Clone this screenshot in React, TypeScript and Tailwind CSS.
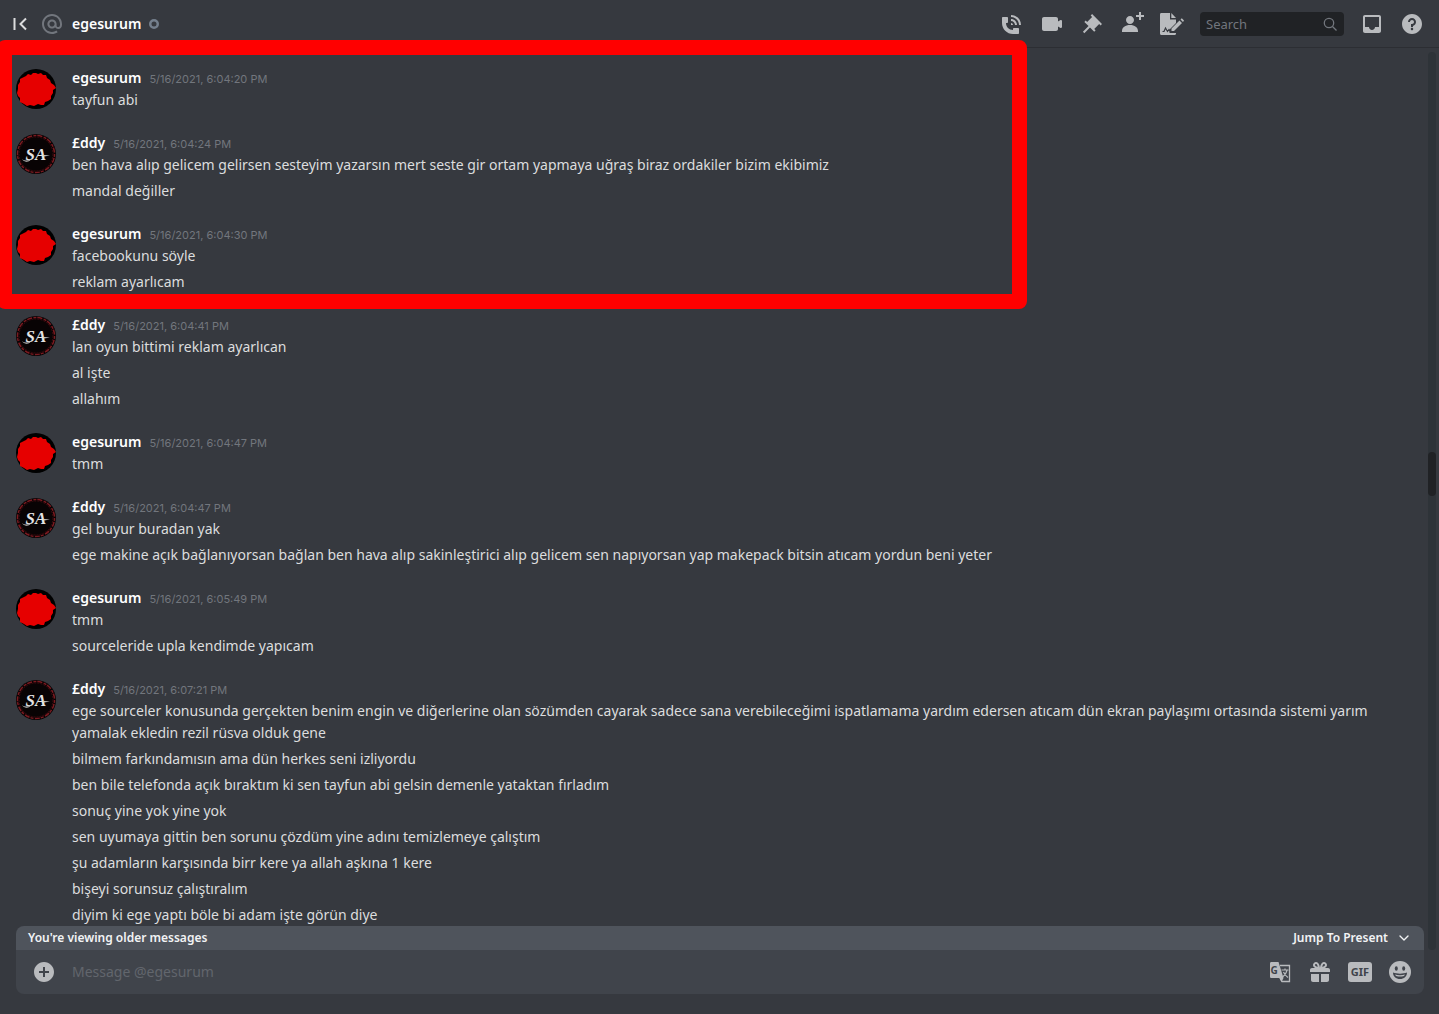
import type { ButtonHTMLAttributes, ReactNode } from "react";
import { ChevronDown } from "lucide-react";

type Author = "egesurum" | "£ddy";

interface MessageGroup {
  author: Author;
  time: string;
  lines: string[];
}

const groups: MessageGroup[] = [
  { author: "egesurum", time: "6:04:20 PM", lines: ["tayfun abi"] },
  {
    author: "£ddy",
    time: "6:04:24 PM",
    lines: [
      "ben hava alıp gelicem gelirsen sesteyim yazarsın mert seste gir ortam yapmaya uğraş biraz ordakiler bizim ekibimiz",
      "mandal değiller",
    ],
  },
  {
    author: "egesurum",
    time: "6:04:30 PM",
    lines: ["facebookunu söyle", "reklam ayarlıcam"],
  },
  {
    author: "£ddy",
    time: "6:04:41 PM",
    lines: ["lan oyun bittimi reklam ayarlıcan", "al işte", "allahım"],
  },
  { author: "egesurum", time: "6:04:47 PM", lines: ["tmm"] },
  {
    author: "£ddy",
    time: "6:04:47 PM",
    lines: [
      "gel buyur buradan yak",
      "ege makine açık bağlanıyorsan bağlan ben hava alıp sakinleştirici alıp gelicem sen napıyorsan yap makepack bitsin atıcam yordun beni yeter",
    ],
  },
  {
    author: "egesurum",
    time: "6:05:49 PM",
    lines: ["tmm", "sourceleride upla kendimde yapıcam"],
  },
  {
    author: "£ddy",
    time: "6:07:21 PM",
    lines: [
      "ege sourceler konusunda gerçekten benim engin ve diğerlerine olan sözümden cayarak sadece sana verebileceğimi ispatlamama yardım edersen atıcam dün ekran paylaşımı ortasında sistemi yarım yamalak ekledin rezil rüsva olduk gene",
      "bilmem farkındamısın ama dün herkes seni izliyordu",
      "ben bile telefonda açık bıraktım ki sen tayfun abi gelsin demenle yataktan fırladım",
      "sonuç yine yok yine yok",
      "sen uyumaya gittin ben sorunu çözdüm yine adını temizlemeye çalıştım",
      "şu adamların karşısında birr kere ya allah aşkına 1 kere",
      "bişeyi sorunsuz çalıştıralım",
      "diyim ki ege yaptı böle bi adam işte görün diye",
    ],
  },
];

const icons = {
  call: "M11 5V3C16.515 3 21 7.486 21 13H19C19 8.589 15.411 5 11 5ZM17 13H15C15 10.795 13.206 9 11 9V7C14.309 7 17 9.691 17 13ZM11 11V13H13C13 11.896 12.105 11 11 11ZM14 16H18C18.553 16 19 16.447 19 17V21C19 21.553 18.553 22 18 22H13C6.925 22 2 17.075 2 11V6C2 5.447 2.448 5 3 5H7C7.553 5 8 5.447 8 6V10C8 10.553 7.553 11 7 11H6C6.063 14.938 9 18 13 18V17C13 16.447 13.447 16 14 16Z",
  video:
    "M21.526 8.149C21.231 7.966 20.862 7.951 20.553 8.105L18 9.382V7C18 5.897 17.103 5 16 5H4C2.897 5 2 5.897 2 7V17C2 18.104 2.897 19 4 19H16C17.103 19 18 18.104 18 17V14.618L20.553 15.894C20.694 15.965 20.847 16 21 16C21.183 16 21.365 15.949 21.526 15.851C21.82 15.668 22 15.347 22 15V9C22 8.653 21.82 8.332 21.526 8.149Z",
  pin: "M22 12L12.101 2.101L10.686 3.514L12.101 4.929L7.151 9.878L5.736 8.465L4.322 9.88L8.565 14.122L2.908 19.778L4.322 21.192L9.979 15.536L14.222 19.778L15.636 18.364L14.222 16.95L19.171 12L20.586 13.414L22 12Z",
  addFriend:
    "M21 3H24V5H21V8H19V5H16V3H19V0H21V3ZM10 12C12.205 12 14 10.205 14 8C14 5.795 12.205 4 10 4C7.795 4 6 5.795 6 8C6 10.205 7.795 12 10 12ZM10 13C5.289 13 2 15.467 2 19V20H18V19C18 15.467 14.711 13 10 13Z",
  inbox:
    "M19 3H4.99C3.88 3 3.01 3.89 3.01 5L3 19C3 20.1 3.88 21 4.99 21H19C20.1 21 21 20.1 21 19V5C21 3.89 20.1 3 19 3ZM19 15H15C15 16.66 13.65 18 12 18C10.35 18 9 16.66 9 15H4.99V5H19V15Z",
  help: "M12 2C6.486 2 2 6.487 2 12C2 17.515 6.486 22 12 22C17.514 22 22 17.515 22 12C22 6.487 17.514 2 12 2ZM12 18.25C11.31 18.25 10.75 17.691 10.75 17C10.75 16.31 11.31 15.75 12 15.75C12.69 15.75 13.25 16.31 13.25 17C13.25 17.691 12.69 18.25 12 18.25ZM13 13.875V15H11V12H12C13.104 12 14 11.103 14 10C14 8.896 13.104 8 12 8C10.896 8 10 8.896 10 10H8C8 7.795 9.795 6 12 6C14.205 6 16 7.795 16 10C16 11.861 14.723 13.429 13 13.875Z",
  at: "M12 2C6.486 2 2 6.486 2 12C2 17.515 6.486 22 12 22C14.039 22 15.993 21.398 17.652 20.259L16.521 18.611C15.195 19.519 13.633 20 12 20C7.589 20 4 16.411 4 12C4 7.589 7.589 4 12 4C16.411 4 20 7.589 20 12V12.782C20 14.17 19.402 15 18.4 15L18.398 15.018C18.338 15.005 18.273 15 18.209 15H18C17.437 15 16.6 14.182 16.6 13.631V12C16.6 9.464 14.537 7.4 12 7.4C9.463 7.4 7.4 9.463 7.4 12C7.4 14.537 9.463 16.6 12 16.6C13.234 16.6 14.35 16.106 15.177 15.313C15.826 16.269 16.93 17 18 17L18.002 16.981C18.064 16.994 18.129 17 18.195 17H18.4C20.552 17 22 15.306 22 12.782V12C22 6.486 17.514 2 12 2ZM12 14.599C10.566 14.599 9.4 13.433 9.4 11.999C9.4 10.565 10.566 9.399 12 9.399C13.434 9.399 14.6 10.565 14.6 11.999C14.6 13.433 13.434 14.599 12 14.599Z",
  attach:
    "M12 2C6.477 2 2 6.477 2 12C2 17.522 6.477 22 12 22C17.523 22 22 17.522 22 12C22 6.477 17.522 2 12 2ZM17 13H13V17H11V13H7V11H11V7H13V11H17V13Z",
  gift: "M16.886 8H20C21.104 8 22 8.896 22 10V12H2V10C2 8.896 2.897 8 4 8H7.114C6.663 7.764 6.236 7.477 5.879 7.121C4.709 5.951 4.709 4.048 5.879 2.879C7.012 1.746 8.986 1.746 10.121 2.877C11.758 4.514 11.979 7.595 12 7.941C12.022 7.595 12.242 4.515 13.879 2.878C15.014 1.745 16.986 1.746 18.121 2.877C19.29 4.049 19.29 5.952 18.121 7.121C17.764 7.477 17.337 7.764 16.886 8ZM7.293 5.707C6.903 5.316 6.903 4.682 7.293 4.292C7.481 4.103 7.732 4 8 4C8.268 4 8.519 4.103 8.707 4.292C9.297 4.882 9.641 5.94 9.825 6.822C8.945 6.639 7.879 6.293 7.293 5.707ZM14.174 6.824C14.359 5.941 14.702 4.883 15.293 4.293C15.481 4.103 15.732 4 16 4C16.268 4 16.519 4.103 16.706 4.291C17.096 4.682 17.097 5.316 16.707 5.707C16.116 6.298 15.057 6.642 14.174 6.824ZM3 14H11V22H5C3.896 22 3 21.104 3 20V14ZM13 14V22H19C20.104 22 21 21.104 21 20V14H13Z",
};

const Icon = ({ d, children }: { d?: string; children?: ReactNode }) => (
  <svg className="size-6 shrink-0" viewBox="0 0 24 24" fill="currentColor" aria-hidden="true">
    {d && <path fillRule="evenodd" clipRule="evenodd" d={d} />}
    {children}
  </svg>
);

const IconButton = ({
  label,
  children,
  ...props
}: { label: string } & ButtonHTMLAttributes<HTMLButtonElement>) => (
  <button
    type="button"
    aria-label={label}
    className="shrink-0 cursor-pointer text-[#b9bbbe] hover:text-[#dcddde]"
    {...props}
  >
    {children}
  </button>
);

const RedAvatar = () => (
  <svg className="size-10 shrink-0" viewBox="0 0 40 40" aria-hidden="true">
    <circle cx="20" cy="20" r="20" fill="#000" />
    <path
      fill="#e60000"
      d="M12 5L15 6L17 4L20 4L22 5L25 4L27 6L30 6L31 9L34 11L35 14L38 16L40 19L37 21L37 24L35 27L35 30L32 32L29 33L28 36L25 36L22 35L18 37L14 36L11 37L8 35L4 33L4 29L2 27L1 24L2 20L2 16L4 13L4 10L8 8L10 7Z"
    />
  </svg>
);

const LogoAvatar = () => (
  <svg className="size-10 shrink-0" viewBox="0 0 40 40" aria-hidden="true">
    <circle cx="20" cy="20" r="20" fill="#080304" />
    <circle cx="20" cy="20" r="18.5" fill="none" stroke="#7a1a20" strokeWidth="1.5" strokeDasharray="3 1 5 1.5" />
    <circle cx="20" cy="20" r="17" fill="none" stroke="#3d0b0f" strokeDasharray="2 1" />
    <text
      x="20"
      y="26"
      textAnchor="middle"
      fontFamily="Liberation Serif, serif"
      fontSize="17"
      fontWeight="700"
      fontStyle="italic"
      fill="#e4e4e4"
    >
      SA
    </text>
    {/* brush tails on both ends of the lettering */}
    <path fill="#c8c8c8" d="M6 25C8 27 12 27 15 25.500C12 29 8 28 6 25ZM28 21L34 21.500L28 22.500Z" />
  </svg>
);

const Message = ({ group }: { group: MessageGroup }) => (
  <li className="mt-[17px] flex gap-4 py-0.5 pr-12 pl-4">
    <div className="mt-0.5 h-10 shrink-0">
      {group.author === "egesurum" ? <RedAvatar /> : <LogoAvatar />}
    </div>
    <div className="min-w-0 flex-1">
      <h2 className="flex h-[22px] items-baseline gap-2">
        <span className="text-sm leading-[22px] font-semibold text-white">{group.author}</span>
        <time className="font-['Inter',sans-serif] text-[11px] leading-[22px] text-[#72767d]">
          5/16/2021, {group.time}
        </time>
      </h2>
      <div className="flex flex-col gap-1">
        {group.lines.map((line) => (
          <p key={line} className="text-sm leading-[22px]">
            {line}
          </p>
        ))}
      </div>
    </div>
  </li>
);

const Header = () => (
  <header className="flex h-12 shrink-0 items-center gap-4 border-b border-[#2c2e33] pr-[15px] pl-2">
    <div className="flex min-w-0 flex-1 items-center gap-2">
      <button type="button" aria-label="Hide channels" className="cursor-pointer text-[#dcddde]">
        <Icon>
          <path d="M6.500 6V18M18 6.500L12.500 12L18 17.500" fill="none" stroke="currentColor" strokeWidth="2" />
        </Icon>
      </button>
      <span className="text-[#72767d]">
        <Icon d={icons.at} />
      </span>
      <h1 className="truncate text-sm font-semibold text-white">egesurum</h1>
      <svg className="size-[10px] shrink-0" viewBox="0 0 10 10" role="img" aria-label="Offline">
        <circle cx="5" cy="5" r="3.750" fill="none" stroke="#747f8d" strokeWidth="2.500" />
      </svg>
    </div>
    <IconButton label="Start voice call"><Icon d={icons.call} /></IconButton>
    <IconButton label="Start video call"><Icon d={icons.video} /></IconButton>
    <IconButton label="Pinned messages"><Icon d={icons.pin} /></IconButton>
    <IconButton label="Add friends to DM"><Icon d={icons.addFriend} /></IconButton>
    <IconButton label="Edit log">
      <Icon>
        <path d="M1.500 1H10V7.500H16V11L9.500 17.500V21H16V21.500C16 22.300 15.500 23 14.500 23H1.500C0.500 23 0 22.300 0 21.500V2.500C0 1.500 0.500 1 1.500 1Z" />
        <path d="M11.300 1L16 6H11.300Z" />
        <path d="M11.500 16.500L19.500 8.500L22 11L14 19H11.500ZM20.500 7.500L21.800 6.300L24 8.500L23 10Z" />
        <path d="M2.500 19.500H4L5.500 16L7.500 19.500L9 17.500L10.500 19.800H16" fill="none" stroke="#36393f" strokeWidth="1.200" />
      </Icon>
    </IconButton>
    <label className="flex h-6 w-36 shrink-0 items-center rounded bg-[#202225] px-1.5 text-[#72767d]">
      <span className="sr-only">Search</span>
      <input
        type="text"
        placeholder="Search"
        className="min-w-0 flex-1 text-[13px] leading-5 outline-none placeholder:text-[#72767d]"
      />
      <svg className="size-4" viewBox="0 0 16 16" fill="none" stroke="currentColor" strokeWidth="1.300" aria-hidden="true">
        <circle cx="7" cy="7" r="4.700" />
        <path d="M10.500 10.500L14.500 14.500" />
      </svg>
    </label>
    <IconButton label="Inbox"><Icon d={icons.inbox} /></IconButton>
    <IconButton label="Help"><Icon d={icons.help} /></IconButton>
  </header>
);

const Composer = () => (
  <div className="shrink-0 pr-[15px] pb-5 pl-4">
    <div className="flex h-6 items-center justify-between rounded-t-lg bg-[#4f545c] px-3 text-xs font-semibold text-[#f2f3f5]">
      <span>You're viewing older messages</span>
      <button type="button" className="flex cursor-pointer items-center gap-2">
        Jump To Present
        <ChevronDown className="size-4" strokeWidth={2} />
      </button>
    </div>
    <form className="flex h-11 items-center rounded-b-lg bg-[#40444b] pr-3 pl-4">
      <IconButton label="Attach a file"><Icon d={icons.attach} /></IconButton>
      <input
        type="text"
        aria-label="Message @egesurum"
        placeholder="Message @egesurum"
        className="ml-4 min-w-0 flex-1 text-sm outline-none placeholder:text-[#62666d]"
      />
      <div className="flex items-center gap-4">
        <IconButton label="Translate">
          <Icon>
            <path d="M12 5.500H21.500V21.500H14L12 18" fill="none" stroke="currentColor" strokeWidth="1.300" />
            <path d="M3.500 2H10.500L15.500 18H3.500C2.500 18 2 17.500 2 16.500V3.500C2 2.500 2.500 2 3.500 2Z" />
            <path d="M11.500 18H15.500L13.500 22Z" />
            <text x="2.500" y="13.500" fontSize="10" fontWeight="700" fill="#40444b">G</text>
            <path
              d="M13.500 10H20.500M17 8.500V10M19 10C18.500 13 16.500 15.500 14.500 17M15.500 12C16.500 14.500 18 16 20 17.500"
              fill="none"
              stroke="currentColor"
              strokeWidth="1.200"
            />
          </Icon>
        </IconButton>
        <IconButton label="Send a gift"><Icon d={icons.gift} /></IconButton>
        <IconButton label="Open GIF picker">
          <span className="flex h-5 w-6 items-center justify-center rounded-[3px] bg-current text-[11px] font-bold">
            <span className="text-[#40444b]">GIF</span>
          </span>
        </IconButton>
        <IconButton label="Select emoji">
          <Icon>
            <circle cx="12" cy="12" r="11" />
            <ellipse cx="8.300" cy="8.500" rx="1.500" ry="2.200" fill="#40444b" />
            <ellipse cx="15.700" cy="8.500" rx="1.500" ry="2.200" fill="#40444b" />
            <path d="M5 12.500C9 14 15 14 19 12.500C19 16.500 16 19 12 19C8 19 5 16.500 5 12.500Z" fill="#40444b" />
            <path d="M7 14.500C10 15.500 14 15.500 17 14.500L16 16C13 16.800 11 16.800 8 16Z" />
          </Icon>
        </IconButton>
      </div>
    </form>
  </div>
);

export default function App() {
  return (
    <div className="relative flex h-screen flex-col overflow-hidden bg-[#36393f] font-['Noto_Sans',sans-serif] text-[#dcddde]">
      <Header />
      <main className="flex min-h-0 flex-1">
        <ol className="min-w-0 flex-1 overflow-hidden">
          {groups.map((group, i) => (
            <Message key={i} group={group} />
          ))}
        </ol>
        <div className="mt-1 mr-[3px] -mb-6 w-2 shrink-0 rounded bg-[#2e3338] pt-[400px]">
          <div className="h-11 rounded bg-[#202225]" />
        </div>
      </main>
      <Composer />

      {/* highlight drawn over the first three messages */}
      <div className="pointer-events-none absolute top-10 -left-[3px] h-[269px] w-[1030px] rounded-lg border-[15px] border-[#ff0000]" />
    </div>
  );
}
